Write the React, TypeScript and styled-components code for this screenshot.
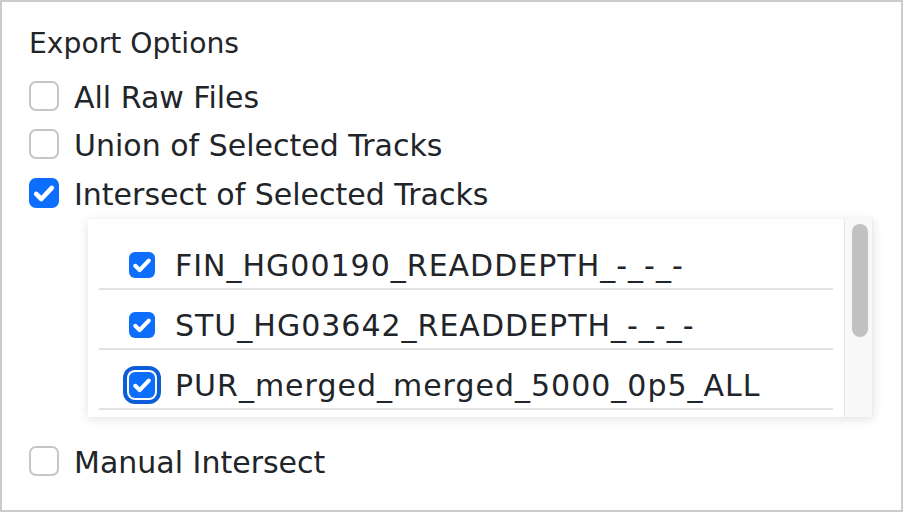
import React from 'react';
import styled, { createGlobalStyle } from 'styled-components';

const GlobalStyle = createGlobalStyle`
  html, body {
    margin: 0;
    padding: 0;
    background: #ffffff;
  }
  body {
    font-family: 'DejaVu Sans', Verdana, sans-serif;
    color: #212529;
  }
`;

const Panel = styled.div`
  box-sizing: border-box;
  width: 903px;
  height: 512px;
  border: 2px solid #cccccc;
  padding: 21px 0 0 27px;
  overflow: hidden;
`;

const Title = styled.div`
  font-size: 28.2px;
  line-height: 42px;
  margin-bottom: 8px;
`;

const OptionRow = styled.label`
  display: flex;
  align-items: center;
  gap: 15px;
  height: 45px;
  margin-bottom: 3.6px;
  font-size: 30px;
  cursor: pointer;
`;

const OptionText = styled.span`
  padding-top: 3px;
`;

const Box = styled.span<{ $checked?: boolean; $size: number; $focused?: boolean }>`
  box-sizing: border-box;
  flex: none;
  display: inline-flex;
  align-items: center;
  justify-content: center;
  width: ${(p) => p.$size}px;
  height: ${(p) => p.$size}px;
  border-radius: ${(p) => Math.round(p.$size * 0.22)}px;
  border: ${(p) => (p.$checked ? 'none' : '2px solid #c6c6c6')};
  background: ${(p) => (p.$checked ? '#0d6efd' : '#ffffff')};
  box-shadow: ${(p) => (p.$focused ? '0 0 0 2px #ffffff, 0 0 0 6px #0b5ed7' : 'none')};

  svg {
    width: 100%;
    height: 100%;
  }
`;

const TrackList = styled.div`
  display: flex;
  width: 785px;
  height: 198px;
  margin: 0 0 22px 59px;
  background: #ffffff;
  box-shadow: 0 2px 10px rgba(0, 0, 0, 0.12);
`;

const Items = styled.div`
  flex: 1;
  padding: 11px 11px 0 11px;
  overflow: hidden;
`;

const TrackRow = styled.label`
  display: flex;
  align-items: center;
  gap: 20px;
  padding: 22px 0 10px 30px;
  border-bottom: 2px solid #e2e2e2;
  font-size: 30px;
  line-height: 26px;
  height: 26px;
  cursor: pointer;
`;

const TrackName = styled.span`
  letter-spacing: 1px;
  position: relative;
  top: 1px;
`;

const ScrollTrack = styled.div`
  box-sizing: border-box;
  width: 29px;
  padding: 5px 4px 0 7px;
  background: #f8f8f8;
  border-left: 1px solid #e8e8e8;
  border-right: 1px solid #ededed;
`;

const Thumb = styled.div`
  width: 16px;
  height: 113px;
  border-radius: 8px;
  background: #c1c1c1;
`;

function Check(props: { checked?: boolean; size: number; focused?: boolean }) {
  return (
    <Box $checked={props.checked} $size={props.size} $focused={props.focused}>
      {props.checked && (
        <svg viewBox='0 0 20 20' fill='none'>
          <path
            d='M4.8 10.6l3.4 3.4L15.2 6.6'
            stroke='#ffffff'
            strokeWidth='3.1'
            strokeLinecap='round'
            strokeLinejoin='round'
          />
        </svg>
      )}
    </Box>
  );
}

const tracks = [
  { name: 'FIN_HG00190_READDEPTH_-_-_-', focused: false },
  { name: 'STU_HG03642_READDEPTH_-_-_-', focused: false },
  { name: 'PUR_merged_merged_5000_0p5_ALL', focused: true },
];

export default function App() {
  return (
    <>
      <GlobalStyle />
      <Panel>
        <Title>Export Options</Title>
        <OptionRow>
          <Check size={30} />
          <OptionText>All Raw Files</OptionText>
        </OptionRow>
        <OptionRow>
          <Check size={30} />
          <OptionText>Union of Selected Tracks</OptionText>
        </OptionRow>
        <OptionRow>
          <Check size={30} checked />
          <OptionText>Intersect of Selected Tracks</OptionText>
        </OptionRow>
        <TrackList>
          <Items>
            {tracks.map((t) => (
              <TrackRow key={t.name}>
                <Check size={26} checked focused={t.focused} />
                <TrackName>{t.name}</TrackName>
              </TrackRow>
            ))}
          </Items>
          <ScrollTrack>
            <Thumb />
          </ScrollTrack>
        </TrackList>
        <OptionRow>
          <Check size={30} />
          <OptionText>Manual Intersect</OptionText>
        </OptionRow>
      </Panel>
    </>
  );
}
